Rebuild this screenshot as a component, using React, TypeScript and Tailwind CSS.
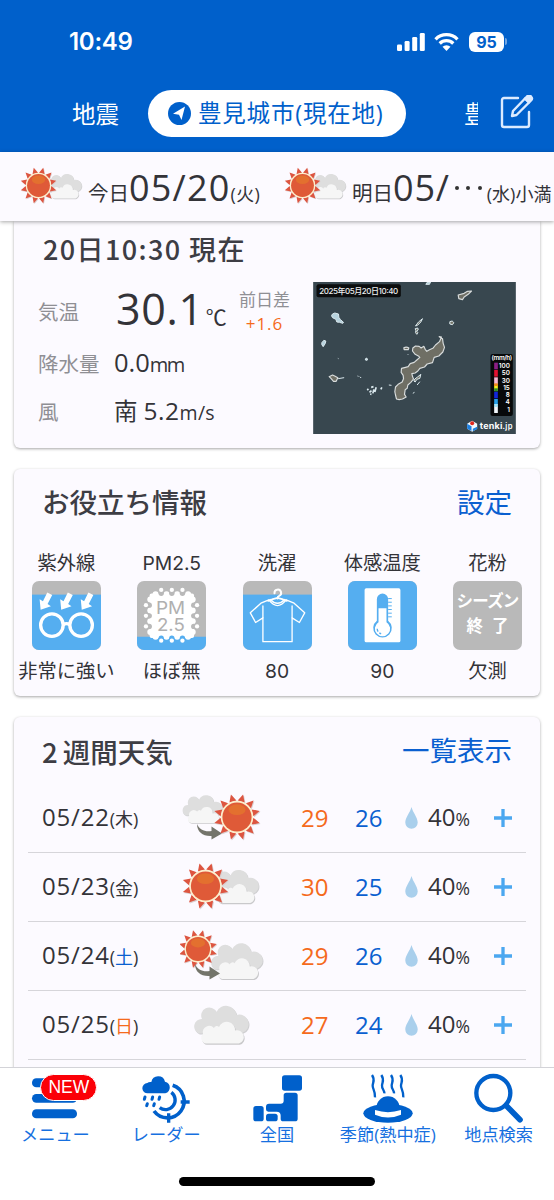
import type { ReactNode } from 'react';

type IconKind = 'cloud-to-sun' | 'sun-cloud' | 'sun-to-cloud' | 'cloud';

const forecast: { date: string; day: string; dayClass: string; icon: IconKind; high: number; low: number; rain: number }[] = [
  { date: '05/22', day: '木', dayClass: '', icon: 'cloud-to-sun', high: 29, low: 26, rain: 40 },
  { date: '05/23', day: '金', dayClass: '', icon: 'sun-cloud', high: 30, low: 25, rain: 40 },
  { date: '05/24', day: '土', dayClass: 'text-[#0a5fd0]', icon: 'sun-to-cloud', high: 29, low: 26, rain: 40 },
  { date: '05/25', day: '日', dayClass: 'text-[#f56a1c]', icon: 'cloud', high: 27, low: 24, rain: 40 },
];

function Sun({ x, y, r }: { x: number; y: number; r: number }) {
  const rays = Array.from({ length: 12 }, (_, i) => i * 30 + 15);
  return (
    <g transform={`translate(${x} ${y}) scale(${r / 23})`}>
      {rays.map((a) => (
        <path key={`s${a}`} d="M-3.6 -16 L0 -23.4 L3.6 -16Z" fill="#d9cfd0" transform={`translate(.9 .9) rotate(${a})`} />
      ))}
      {rays.map((a) => (
        <path key={a} d="M-3.6 -16 L0 -23.4 L3.6 -16Z" fill="#dd5540" transform={`rotate(${a})`} />
      ))}
      <circle r="16.2" fill="#fdeecb" />
      <circle r="14.6" fill="#df5a38" />
      <ellipse cy="-7.3" rx="8.6" ry="5.4" fill="#e3702f" />
    </g>
  );
}

function Cloud({ x, y, w }: { x: number; y: number; w: number }) {
  const back = 'M7 30a7.5 7.5 0 0 1 3-14.5A8 8 0 0 1 24.5 8.5A10.5 10.5 0 0 1 44.5 11.5A9.3 9.3 0 0 1 50 29.5Z';
  const front = 'M14 40a5.5 5.5 0 0 1-3-9.5A6.5 6.5 0 0 1 22 24.5a3 3 0 0 1 5-1A8.3 8.3 0 0 1 43 27a6.5 6.5 0 0 1 4 13Z';
  return (
    <g transform={`translate(${x} ${y}) scale(${w / 57})`}>
      <path d={back} fill="#cfcfd1" transform="translate(.8 1)" />
      <path d={back} fill="#dedede" />
      <path d={front} fill="#c9c9cb" transform="translate(.9 1.2)" />
      <path d={front} fill="#f6f6f6" />
    </g>
  );
}

function Arrow({ x, y }: { x: number; y: number }) {
  return (
    <path
      transform={`translate(${x} ${y})`}
      d="M0 0C2.5 6 8 8 14.5 7V2.500L25 9.500L14.500 15.500V12C6 12.500 0 8 0 0Z"
      fill="#74756b"
    />
  );
}

function WeatherIcon({ kind }: { kind: IconKind }) {
  return (
    <svg width="84" height="69" viewBox="0 0 84 69">
      {kind === 'cloud-to-sun' && (
        <>
          <Cloud x={1} y={9.5} w={42} />
          <Arrow x={17} y={40} />
          <Sun x={57} y={33} r={23} />
        </>
      )}
      {kind === 'sun-cloud' && (
        <>
          <Cloud x={29} y={15} w={50} />
          <Sun x={25.5} y={33} r={23} />
        </>
      )}
      {kind === 'sun-to-cloud' && (
        <>
          <Cloud x={29} y={19} w={54} />
          <Sun x={18} y={27} r={19} />
          <Arrow x={15} y={42} />
        </>
      )}
      {kind === 'cloud' && <Cloud x={12} y={12.5} w={57} />}
    </svg>
  );
}

function SmallWeatherIcon() {
  return (
    <svg width="64" height="38" viewBox="0 0 64 38">
      <Cloud x={25} y={5.5} w={37} />
      <Sun x={18.5} y={18.5} r={18} />
    </svg>
  );
}

function StatusBar() {
  return (
    <div className="flex h-[83px] items-center justify-between pl-[69px] pr-[47px]">
      <span className="font-['Inter',sans-serif] text-[24px] font-semibold leading-none tracking-[-0.3px]">10:49</span>
      <div className="flex items-center">
        <svg width="28" height="18" viewBox="0 0 28 18" fill="#fff">
          <rect y="11.5" width="5" height="6.5" rx="1.3" />
          <rect x="7.6" y="8" width="5" height="10" rx="1.3" />
          <rect x="15.2" y="4" width="5" height="14" rx="1.3" />
          <rect x="22.8" width="5" height="18" rx="1.3" />
        </svg>
        <svg className="ml-[9px]" width="25" height="18" viewBox="0 0 25 18" fill="none" stroke="#fff" strokeWidth="3.3">
          <path d="M1.5 6.3a15.500 15.500 0 0 1 22 0" />
          <path d="M5.7 10.5a9.700 9.700 0 0 1 13.600 0" />
          <path d="M12.5 18l-4-4.200a5.700 5.700 0 0 1 8 0Z" fill="#fff" stroke="none" />
        </svg>
        <span className="ml-[10px] flex h-5 w-[35px] items-center justify-center rounded-md bg-white font-['Inter',sans-serif] text-[16px] font-bold leading-none text-[#0060cb]">
          95
        </span>
        <span className="ml-px h-[7px] w-[2px] rounded-r bg-[#6fa4e2]" />
      </div>
    </div>
  );
}

function LocationTabs() {
  return (
    <div className="flex h-[69px] items-start pl-[72px] pt-[7px] text-[23.5px]">
      <span className="w-[76px] leading-[49px]">地震</span>
      <div className="flex h-[47px] w-[258px] items-center gap-[7px] rounded-full bg-white pl-5 text-[#0060cb]">
        <svg width="23" height="23" viewBox="0 0 23 23">
          <circle cx="11.5" cy="11.5" r="11.5" fill="#0060cb" />
          <path d="M17 4.5L13.5 18L11 12.800L5 11.800Z" fill="#fff" />
        </svg>
        <span className="whitespace-nowrap leading-[49px] tracking-[0.8px]">豊見城市(現在地)</span>
      </div>
      <span className="ml-[58px] w-[14px] overflow-hidden whitespace-nowrap leading-[49px]">豊</span>
      <svg className="ml-[22px] mt-[5px]" width="36" height="36" viewBox="0 0 36 36" fill="none" stroke="#dcebff" strokeWidth="2.4" strokeLinejoin="round" strokeLinecap="round">
        <path d="M18 3H4a2 2 0 0 0-2 2V30a2 2 0 0 0 2 2H27a2 2 0 0 0 2-2V17" />
        <path d="M13 16L25 3.500l4 4L16.500 20l-4.500 1Z" />
        <path d="M25 3.5l2-2a2.500 2.500 0 0 1 4 4l-2 2Z" fill="#dcebff" />
      </svg>
    </div>
  );
}

function DayStrip() {
  return (
    <div className="relative z-10 flex h-[69px] shrink-0 items-start overflow-hidden bg-[#fcfaff] pl-5 pt-[15px] whitespace-nowrap shadow-[0_1px_4px_rgba(0,0,0,0.35)]">
      <div className="flex w-[264px] shrink-0">
        <SmallWeatherIcon />
        <p className="ml-1 leading-[42px]">
          <span className="text-[20.5px]">今日</span>
          <span className="text-[36px] tracking-[1.2px]">05/20</span>
          <span className="text-[18px] tracking-[0.3px]">(火)</span>
        </p>
      </div>
      <div className="flex shrink-0">
        <SmallWeatherIcon />
        <p className="ml-1 leading-[42px]">
          <span className="text-[20.5px]">明日</span>
          <span className="text-[36px] tracking-[0.8px]">05/</span>
          <span className="relative -top-[11px] inline-flex w-[37px] justify-around px-px">
            <i className="size-[4px] rounded-full bg-[#333]" />
            <i className="size-[4px] rounded-full bg-[#333]" />
            <i className="size-[4px] rounded-full bg-[#333]" />
          </span>
          <span className="text-[18px]">(水)小満</span>
        </p>
      </div>
    </div>
  );
}

function RadarMap() {
  const scale = [
    { value: '100', y: 287, color: '#8c1f86' },
    { value: '50', y: 309, color: '#e01030' },
    { value: '30', y: 331, color: '#f7b7d5' },
    { value: '15', y: 352, color: '#f5ee20' },
    { value: '8', y: 374, color: '#1226d8' },
    { value: '4', y: 396, color: '#27a0e8' },
    { value: '1', y: 418, color: '#f2f7fb' },
  ];
  return (
    <svg className="block h-[152px] w-[203px]" viewBox="25 36 608 456" fontFamily="'Inter','Noto Sans CJK JP',sans-serif" fontWeight="600">
      <rect x="25" y="36" width="608" height="456" fill="#38474f" />
      <g fill="#6f6f65" stroke="#d8dcdc" strokeWidth="3.5" strokeLinejoin="round">
        {/* Okinawa main island */}
        <path d="M403 200l10 6 2 14 4 12-5 14-12 12-14 4-5 16-16 4-8 9-14 4-6 8-8 6-10 2 2 8 3 8-8 10-9 8-2 10-6 4-2 14 5 8-11 6-10 2-8-2-3-12-2-10 2-14 8-8 12-7 4-10-1-10-6-9 1-12 12-3 8-2 6-9 12-4 8-7 9-8-3-3-11-6-8-10 1-9 8-6 11 1 6 5 8-5 4 9 5 6 8-5 10-4 8-10 12-10 6-14Z" />
        <path d="M460 75l18-5 10-6 12-1-10 10-12 8-5 8-11-3Z" />
        <path d="M73 320l10-5 8 4 8 4-5 11-8 0-7-8Z" />
        <path d="M297 233q8-4 15 1l-2 5-12 0Z" />
      </g>
      <g fill="#b7d3de" stroke="#dbe9ee" strokeWidth="3" strokeLinejoin="round">
        <path d="M83 132l7-3 11 3 1 10 5 7 9 8-2 3-10-3-8-1-3-8-10-5-3-6Z" />
        <path d="M51 218l6-7 6 2-2 8-6 9-4-6Z" />
        <path d="M363 43l4-6 10-1-3 7Z" />
        <path d="M332 168l9-12 12-10-5 10-10 10Z" fill="#77776a" />
        <path d="M331 176l8-2 1 6-5 3 4 5-3 5-4-5 1-6Z" fill="#77776a" />
        <path d="M435 155l7-2 5 5-4 6-8-2Z" fill="#77776a" />
        <path d="M181 267l5-3 2 6-5 1Z" />
        <path d="M330 327l8-6 10-8-3 12-9 3-5 8-4-3Z" fill="#77776a" />
        <path d="M337 345l8-10M324 370l5-3M309 253l2 2M100 326l18-3M158 318l3 1M165 320l4 4M252 345l8 1M99 265l2 1" />
        <path d="M187 360l4-3M194 367l6-5M199 352l7-2M207 358l-3 12M214 352l-4 14M228 358l3-6M196 372l4 1" strokeWidth="5" />
      </g>
      <rect x="35" y="43" width="253" height="39" rx="6" fill="#0b0d0e" />
      <text x="43" y="72" fontSize="24" fill="#eceeee" textLength="237" fontWeight="500">2025年05月20日10:40</text>
      <rect x="557" y="252" width="67" height="186" rx="6" fill="#07090a" />
      <text x="560" y="271" fontSize="19" fill="#fff" textLength="62">(mm/h)</text>
      {scale.map((s) => (
        <g key={s.value}>
          <rect x="568" y={s.y - 9} width="11" height="20" fill={s.color} />
          <text x="615" y={s.y + 7} fontSize="19" fill="#fff" textAnchor="end">{s.value}</text>
        </g>
      ))}
      <rect x="568" y="340" width="11" height="8" fill="#f08a1c" />
      <rect x="568" y="355" width="11" height="9" fill="#2e8a2a" />
      <rect x="568" y="402" width="11" height="9" fill="#a8e4f5" />
      <path d="M502 452l15 9v15l-15 9-15-9v-15Z" fill="#f4f8fc" />
      <path d="M487 461l13 8v14l-13-7ZM517 470l-13 6v8l13-7Z" fill="#1c7fe0" />
      <circle cx="502" cy="460" r="6" fill="#e1281e" />
      <text x="525" y="477" fontSize="27" fill="#fff" fontWeight="700" textLength="68">tenki</text>
      <text x="593" y="477" fontSize="23" fill="#fff" textLength="30">.jp</text>
    </svg>
  );
}

function CurrentCard() {
  return (
    <section className="flex h-[227px] shrink-0 justify-between rounded-b-md bg-[#fcfaff] pl-6 pr-6 shadow-[0_1px_3px_rgba(0,0,0,0.35)]">
      <div className="flex flex-col whitespace-nowrap">
        <h2 className="ml-[5px] mt-[8px] font-['Noto_Sans_CJK_JP',sans-serif] text-[27px] font-medium leading-10 tracking-[1.4px] text-[#3d3d44]">20日10:30 現在</h2>
        <div className="mt-[15px] flex h-[56px] items-center">
          <span className="w-[78px] text-[20.5px] text-[#8f8f94]">気温</span>
          <p className="w-[123px] pt-[3px] leading-[56px]">
            <span className="text-[43px] tracking-[0.7px]">30.1</span>
            <span className="ml-[2px] text-[21px]">℃</span>
          </p>
          <div className="flex w-[51px] flex-col items-center text-[17px] leading-6">
            <span className="text-[#8f8f94]">前日差</span>
            <span className="tracking-[1px] text-[#f56a1c]">+1.6</span>
          </div>
        </div>
        <div className="flex h-[48px] items-center">
          <span className="w-[76px] text-[20.5px] text-[#8f8f94]">降水量</span>
          <p className="leading-[50px]"><span className="text-[25.5px]">0.0</span><span className="text-[20px] tracking-[-1.7px]">mm</span></p>
        </div>
        <div className="flex h-[48px] items-center">
          <span className="w-[76px] text-[20.5px] text-[#8f8f94]">風</span>
          <p className="leading-[48px]"><span className="text-[23.5px]">南 </span><span className="text-[24.5px] tracking-[0.5px]">5.2</span><span className="text-[19.5px] tracking-[0.3px]">m/s</span></p>
        </div>
      </div>
      <div className="pt-[61px]">
        <RadarMap />
      </div>
    </section>
  );
}

function Tile({ fill, children }: { fill: number; children?: ReactNode }) {
  return (
    <svg className="h-[69px] w-[69px] rounded-[7px]" viewBox="0 0 208 208">
      <rect width="208" height="208" fill="#b9b9b9" />
      <rect y={208 - fill} width="208" height={fill} fill="#55aef0" />
      {children}
    </svg>
  );
}

function UvTile() {
  return (
    <Tile fill={167}>
      {[0, 62, 124].map((dx) => (
        <path key={dx} transform={`translate(${dx} 0)`} d="M46 35l15 7-14 27 10 7-31 11-3-32 10 6Z" fill="#fff" />
      ))}
      <g fill="none" stroke="#fff" strokeWidth="10">
        <circle cx="60" cy="133" r="34" />
        <circle cx="148" cy="133" r="34" />
        <path d="M94 132q10-7 20 0" />
      </g>
    </Tile>
  );
}

function PmTile() {
  const stops = [73, 105, 137];
  const bumps = [56, 89, 121, 154];
  return (
    <Tile fill={40}>
      <rect x="38" y="38" width="134" height="134" rx="6" fill="#fff" />
      {bumps.map((n) => (
        <g key={n} fill="#fff">
          <circle cx={n} cy="40" r="9" />
          <circle cx={n} cy="168" r="9" />
          <circle cx="40" cy={n} r="9" />
          <circle cx="168" cy={n} r="9" />
        </g>
      ))}
      {stops.map((n) => (
        <g key={n}>
          <g fill="#b9b9b9">
            <circle cx={n} cy="37" r="8" />
            <circle cx="37" cy={n} r="8" />
            <circle cx="171" cy={n} r="8" />
          </g>
          <circle cx={n} cy="172" r="8" fill="#55aef0" />
          <g fill="#fff">
            <circle cx={n} cy="27" r="6.5" />
            <circle cx={n} cy="180" r="6.5" />
            <circle cx="27" cy={n} r="6.5" />
            <circle cx="181" cy={n} r="6.5" />
          </g>
        </g>
      ))}
      <g fill="#b0b0b0" fontFamily="'Inter',sans-serif" fontSize="54">
        <text x="57" y="100" textLength="88" lengthAdjust="spacingAndGlyphs">PM</text>
        <text x="60" y="152" textLength="84" lengthAdjust="spacingAndGlyphs">2.5</text>
      </g>
    </Tile>
  );
}

function LaundryTile() {
  return (
    <Tile fill={167}>
      <g fill="none" stroke="#fff" strokeWidth="4" strokeLinejoin="round" strokeLinecap="round">
        <path d="M78 57L54 67L22 96L38 125L60 111V183H148V111L170 125L186 96L154 67L130 57" />
        <path d="M60 111V75M148 111V75" />
        <path d="M78 57q26 34 52 0M82 56q22 22 44 0" />
        <path d="M76 60q14-6 28-9 14 3 28 9" strokeWidth="5" />
        <path d="M95 37a10 10 0 1 1 14 8q-5 2-5 8" strokeWidth="6" />
      </g>
    </Tile>
  );
}

function ThermometerTile() {
  return (
    <Tile fill={208}>
      <rect x="50" y="22" width="108" height="163" rx="5" fill="#fff" />
      <path d="M87 55a17 17 0 0 1 34 0V120a28 28 0 1 1-34 0Z" fill="#55aef0" />
      <path d="M92 82H116V124a23 23 0 1 1-24 0Z" fill="#fff" />
      <path d="M88 144a16 16 0 0 0 12 15" fill="none" stroke="#55aef0" strokeWidth="4" strokeDasharray="9 5" />
      <path d="M121 53h11M121 64h11M121 75h11M121 86h11M121 97h11M121 108h11" stroke="#55aef0" strokeWidth="3" />
    </Tile>
  );
}

function SeasonEndTile() {
  return (
    <div className="flex h-[69px] w-[69px] flex-col items-center justify-center rounded-[7px] bg-[#b9b9b9] pb-[3px] text-[16.5px] font-bold leading-[25px] text-white">
      <span className="whitespace-nowrap tracking-[-0.8px]">シーズン</span>
      <span className="-mr-[9px] tracking-[9px]">終了</span>
    </div>
  );
}

function InfoCard() {
  const items = [
    { label: '紫外線', value: '非常に強い', tile: <UvTile /> },
    { label: 'PM2.5', value: 'ほぼ無', tile: <PmTile /> },
    { label: '洗濯', value: '80', tile: <LaundryTile /> },
    { label: '体感温度', value: '90', tile: <ThermometerTile /> },
    { label: '花粉', value: '欠測', tile: <SeasonEndTile /> },
  ];
  return (
    <section className="mt-[21px] h-[227px] shrink-0 rounded-md bg-[#fcfaff] pt-[14px] shadow-[0_1px_3px_rgba(0,0,0,0.35)]">
      <div className="flex justify-between pl-7 pr-7 text-[27.5px] leading-10">
        <h2 className="font-medium text-[#3d3d44]">お役立ち情報</h2>
        <a className="text-[#0a5fd0]">設定</a>
      </div>
      <div className="mt-[26px] flex justify-center font-['Inter','Noto_Sans_CJK_JP',sans-serif] text-[19.3px] leading-[28px]">
        {items.map((item) => (
          <div key={item.label} className="flex w-[105.3px] shrink-0 flex-col items-center whitespace-nowrap">
            <span className="mb-[4px]">{item.label}</span>
            {item.tile}
            <span className="mt-[7px]">{item.value}</span>
          </div>
        ))}
      </div>
    </section>
  );
}

function ForecastCard() {
  return (
    <section className="mt-[21px] h-[400px] shrink-0 rounded-md bg-[#fcfaff] pt-[14px] shadow-[0_1px_3px_rgba(0,0,0,0.35)]">
      <div className="flex justify-between pl-7 pr-7 text-[27.5px] leading-10">
        <h2 className="font-['Noto_Sans_CJK_JP',sans-serif] font-medium text-[#3d3d44]"><span className="mr-[5px]">2</span>週間天気</h2>
        <a className="text-[#0a5fd0]">一覧表示</a>
      </div>
      <div className="mx-[14px] mt-[13px]">
        {forecast.map((row) => (
          <div key={row.date} className="flex h-[69.1px] items-center border-b border-[#d6d5da] pl-[14px] text-[24px]">
            <p className="w-[138px] whitespace-nowrap leading-[69px]">
              <span className="tracking-[0.8px]">{row.date}</span>
              <span className="text-[18px]">(<span className={row.dayClass}>{row.day}</span>)</span>
            </p>
            <WeatherIcon kind={row.icon} />
            <span className="ml-[37px] w-[54px] text-[#f56a1c]">{row.high}</span>
            <span className="w-[50px] text-[#0a5fd0]">{row.low}</span>
            <svg width="13" height="22" viewBox="0 0 13 23">
              <path d="M6.5 0C8 6 13 11 13 16.200a6.500 6.500 0 0 1-13 0C0 11 5 6 6.500 0Z" fill="#a9cfec" />
            </svg>
            <p className="ml-[10px] w-[66px] leading-[69px]">{row.rain}<span className="text-[17.5px]">%</span></p>
            <svg width="18" height="18" viewBox="0 0 18 18" stroke="#4ba7f0" strokeWidth="3.3">
              <path d="M9 0V18M0 9H18" />
            </svg>
          </div>
        ))}
      </div>
    </section>
  );
}

function MenuIcon() {
  return (
    <div className="relative">
      <svg width="50" height="50" viewBox="92 37 150 150" fill="#0060cb">
        <rect x="98" y="53" width="135" height="27" rx="13" />
        <rect x="98" y="100" width="135" height="26" rx="13" />
        <rect x="98" y="146" width="135" height="27" rx="13" />
      </svg>
      <span className="absolute left-[10px] top-px flex h-[27px] w-[57px] items-center justify-center rounded-full border border-white bg-[#fb0007] font-['Liberation_Sans',sans-serif] text-[17.5px] leading-none text-white">
        NEW
      </span>
    </div>
  );
}

function RadarIcon() {
  return (
    <svg width="50" height="50" viewBox="424 37 150 150" fill="none" stroke="#0060cb">
      <path d="M519 74A50 50 0 1 1 463 151" strokeWidth="11" />
      <path d="M515 95A28 28 0 1 1 480 141" strokeWidth="10" />
      <path d="M543 124H570M507 158V186" strokeWidth="10" />
      <path d="M444 98a15 15 0 0 1-1-31q4-4 12-3a21 21 0 0 1 41-1a18 18 0 0 1 1 35Z" fill="#0060cb" stroke="none" />
      <path d="M436 109l-2 7M459 109l-2 7M480 109l-2 7M443 129l-2 6M464 129l-2 6" strokeWidth="9" strokeLinecap="round" />
    </svg>
  );
}

function JapanIcon() {
  return (
    <svg width="50" height="50" viewBox="754 37 150 150" fill="#0060cb">
      <rect x="844" y="44" width="60" height="46" rx="8" />
      <path d="M857 96h26q8 0 8 8v70q0 8-8 8h-35q-8 0-8-8v-9q0-12-12-12h-25q-7 0-7-7v-8q0-9 9-9h35q9 0 9-9v-16q0-8 8-8Z" />
      <rect x="758" y="136" width="31" height="46" rx="8" />
      <rect x="796" y="159" width="35" height="23" rx="8" />
    </svg>
  );
}

function HatIcon() {
  return (
    <svg width="50" height="50" viewBox="263 37 150 150" fill="#0060cb">
      {[290, 318, 347, 375].map((x, i) => (
        <path key={x} d={`M${x} 43c10 14 3 20 2 31-1 11 8 15 7 ${i === 0 || i === 3 ? 36 : 24}`} fill="none" stroke="#0060cb" strokeWidth="7" />
      ))}
      <ellipse cx="338" cy="158" rx="74" ry="28" />
      <path d="M303 142a35 35 0 0 1 70 0Z" />
      <path d="M299 148q39 13 78 0v14q-39 17-78 0Z" fill="#fff" />
    </svg>
  );
}

function SearchIcon() {
  return (
    <svg width="50" height="50" viewBox="597 37 150 150" fill="none" stroke="#0060cb">
      <circle cx="655" cy="97" r="51" strokeWidth="13" />
      <path d="M694 135L735 177" strokeWidth="17" strokeLinecap="round" />
    </svg>
  );
}

function BottomNav() {
  const tabs = [
    { label: 'メニュー', icon: <MenuIcon /> },
    { label: 'レーダー', icon: <RadarIcon /> },
    { label: '全国', icon: <JapanIcon /> },
    { label: '季節(熱中症)', icon: <HatIcon /> },
    { label: '地点検索', icon: <SearchIcon /> },
  ];
  return (
    <nav className="flex h-[133px] shrink-0 flex-col items-center border-t border-[#d3d3d8] bg-white pt-[5px]">
      <div className="flex w-full">
        {tabs.map((tab) => (
          <div key={tab.label} className="flex flex-1 basis-0 flex-col items-center">
            {tab.icon}
            <span className="whitespace-nowrap text-[17.2px] leading-[24px] text-[#1670e0]">{tab.label}</span>
          </div>
        ))}
      </div>
      <div className="mt-[30px] h-[9px] w-[196px] rounded-full bg-black" />
    </nav>
  );
}

export default function App() {
  return (
    <div className="flex h-[1200px] w-[554px] flex-col overflow-hidden bg-white font-['Open_Sans','Noto_Sans_CJK_JP',sans-serif] text-[#333338]">
      <header className="h-[152px] shrink-0 bg-[#0060cb] text-white">
        <StatusBar />
        <LocationTabs />
      </header>
      <DayStrip />
      <main className="flex min-h-0 flex-1 flex-col overflow-hidden px-[14px]">
        <CurrentCard />
        <InfoCard />
        <ForecastCard />
      </main>
      <BottomNav />
    </div>
  );
}
